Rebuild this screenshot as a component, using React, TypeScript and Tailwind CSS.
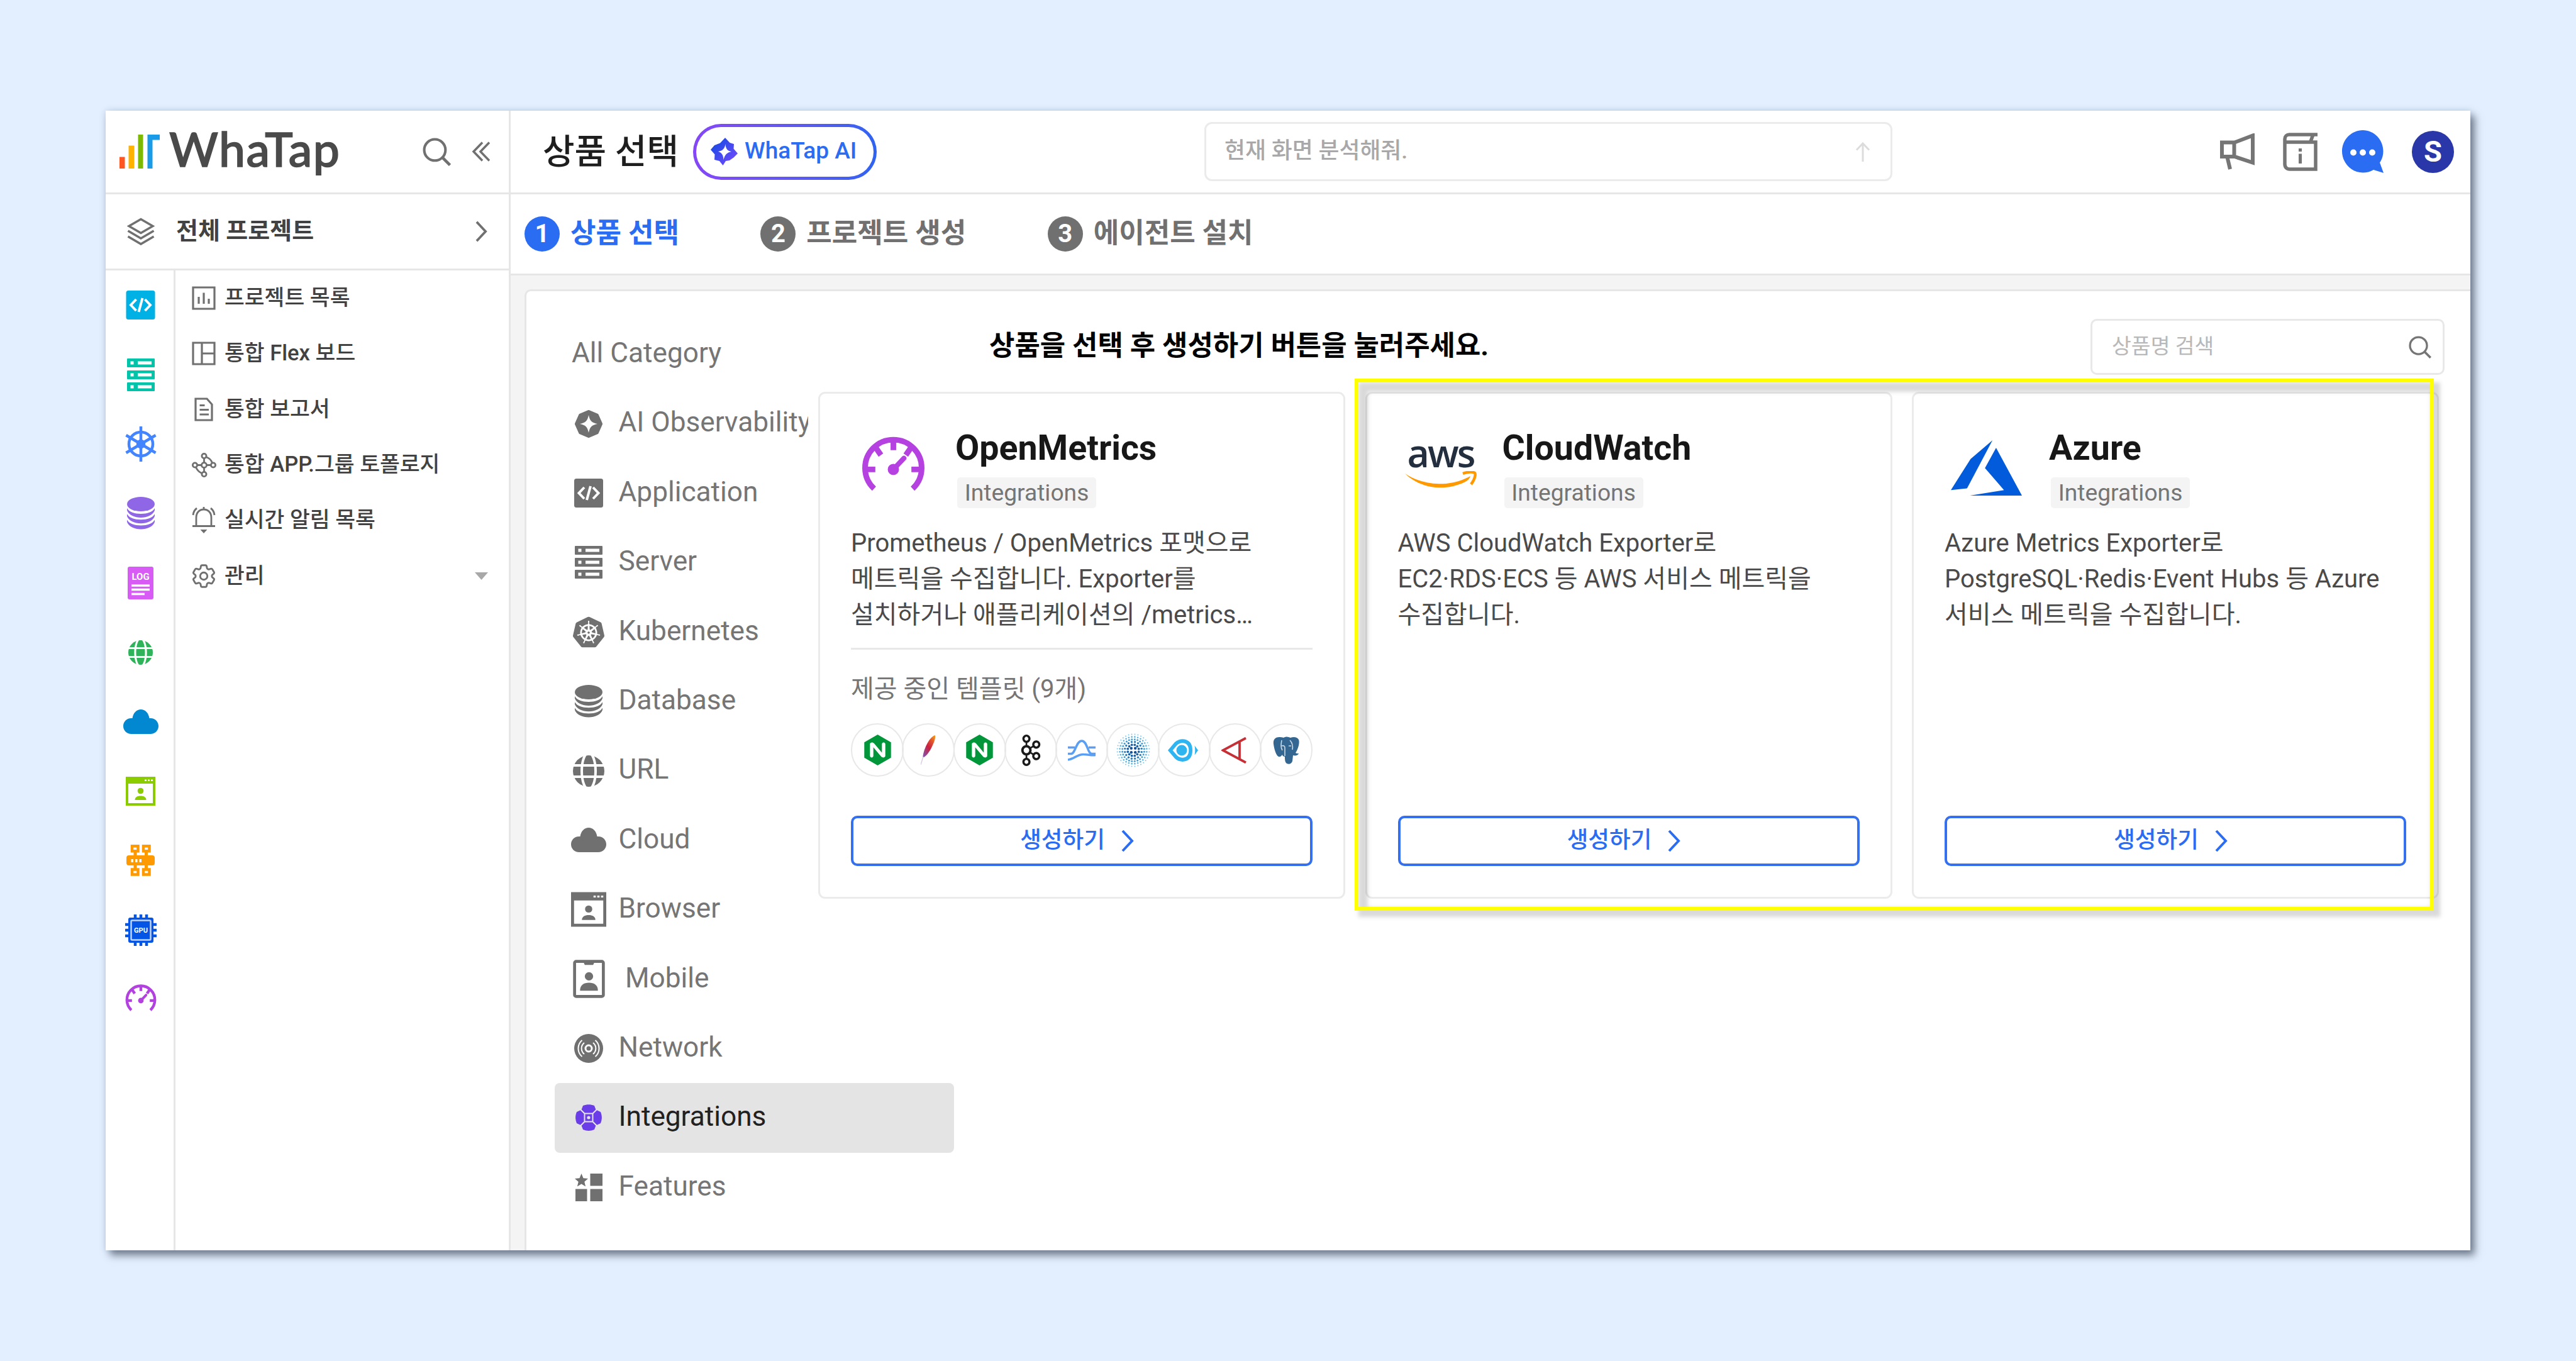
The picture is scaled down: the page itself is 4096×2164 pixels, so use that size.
import React from 'react';
import { SiApachekafka, SiKubernetes, SiNginx } from 'react-icons/si';
import { HiOutlineCog6Tooth } from 'react-icons/hi2';

interface IconProps {
  className?: string;
}

/* ---------- product icons (shared by the rail and the category list) ---------- */

const CodeIcon: React.FC<IconProps> = ({ className }) => (
  <svg viewBox="0 0 46 46" className={className}>
    <rect width="46" height="46" rx="3.5" fill="currentColor" />
    <path d="M16 14l-8.500 9 8.500 9M26 12l-6 22M30 14l8.500 9-8.500 9" fill="none" stroke="#fff" strokeWidth="4" />
  </svg>
);

const ServerIcon: React.FC<IconProps> = ({ className }) => (
  <svg viewBox="0 0 44 52" className={className}>
    {[0, 19, 38].map((y) => (
      <g key={y}>
        <rect y={y} width="44" height="14" rx="1" fill="currentColor" />
        <rect x="5.500" y={y + 4.5} width="5" height="5" fill="#fff" />
        <rect x="17" y={y + 4.5} width="22" height="5" fill="#fff" />
      </g>
    ))}
  </svg>
);

const DatabaseIcon: React.FC<IconProps> = ({ className }) => (
  <svg viewBox="0 0 44 52" className={className} fill="currentColor">
    <ellipse cx="22" cy="11.500" rx="22" ry="11.500" />
    {[0, 9.2, 18.4].map((dy) => (
      <path
        key={dy}
        transform={`translate(0 ${dy})`}
        d="M0 18C3 24 12 27 22 27S41 24 44 18V21.500C41 29 32 33 22 33S3 29 0 21.500Z"
      />
    ))}
  </svg>
);

const GlobeIcon: React.FC<IconProps> = ({ className }) => (
  <svg viewBox="0 0 50 50" className={className}>
    <circle cx="25" cy="25" r="25" fill="currentColor" />
    <g fill="none" stroke="#fff" strokeWidth="4">
      <ellipse cx="25" cy="25" rx="11" ry="29" />
      <path d="M0 16h50M0 34h50" />
    </g>
  </svg>
);

const CloudIcon: React.FC<IconProps> = ({ className }) => (
  <svg viewBox="0 0 56 39" className={className} fill="currentColor">
    <path d="M13 39C5 39 0 33 0 26.500S5 14 12.500 14h2C16 5 21.500 0 28 0s12 5 13.500 14h2C51 14 56 20 56 26.500S51 39 43 39z" />
  </svg>
);

const BrowserIcon: React.FC<IconProps> = ({ className }) => (
  <svg viewBox="0 0 47 46" className={className} fill="currentColor">
    <path fillRule="evenodd" d="M0 0h47v46H0zM4 11v31h39V11z" />
    <path d="M30 4.500h3v2.500h-3zM35 4.500h3v2.500h-3zM40 4.500h3v2.500h-3z" fill="#fff" />
    <circle cx="23.500" cy="22.500" r="4.800" />
    <path d="M14.500 37c0-4.500 4-6.500 9-6.500s9 2 9 6.500z" />
  </svg>
);

const GaugeIcon: React.FC<IconProps> = ({ className }) => (
  <svg viewBox="0 0 100 90" className={className} fill="none" stroke="currentColor">
    <path d="M19 86A45.500 45.500 0 1 1 81 86" strokeWidth="9" />
    <path d="M50 4v20M21 19l9 13M79 19l-9 13M4 55h17M96 55H79" strokeWidth="9" />
    <path d="M50 55l17-18" strokeWidth="8" strokeLinecap="round" />
    <circle cx="50" cy="55" r="9" fill="currentColor" stroke="none" />
  </svg>
);

/* ---------- rail only ---------- */

const HelmIcon: React.FC<IconProps> = ({ className }) => (
  <svg viewBox="0 0 50 56" className={className} fill="none" stroke="currentColor" strokeWidth="4.500">
    <circle cx="25" cy="28" r="19" />
    <circle cx="25" cy="28" r="5" fill="currentColor" />
    <path d="M25 0v56M1.500 14l47 28M48.500 14l-47 28" />
  </svg>
);

const LogIcon: React.FC<IconProps> = ({ className }) => (
  <svg viewBox="0 0 41 52" className={className}>
    <rect width="41" height="52" rx="3" fill="currentColor" />
    <text x="20.500" y="21" textAnchor="middle" fill="#fff" className="font-[Roboto] text-[15px] font-bold">
      LOG
    </text>
    <path d="M6 30h29M6 36.500h29M6 43.500h21" stroke="#fff" strokeWidth="3.500" />
  </svg>
);

const SwitchIcon: React.FC<IconProps> = ({ className }) => (
  <svg viewBox="0 0 45 50" className={className}>
    <rect y="17" width="45" height="16" rx="4" fill="currentColor" />
    <path d="M14 8v34M31.500 8v34" stroke="currentColor" strokeWidth="5" />
    <path d="M7.500 23h3.500v5H7.500zM14 23h3.500v5H14zM20.500 23h3.500v5h-3.500z" fill="#fff" />
    <g fill="#fff" stroke="currentColor" strokeWidth="4.500">
      <rect x="9" y="2.300" width="9.500" height="8" />
      <rect x="27" y="2.300" width="9.500" height="8" />
      <rect x="9" y="39.500" width="9.500" height="8" />
      <rect x="27" y="39.500" width="9.500" height="8" />
    </g>
  </svg>
);

const GpuIcon: React.FC<IconProps> = ({ className }) => (
  <svg viewBox="0 0 50 50" className={className}>
    <path
      d="M16 0v50M25 0v50M34 0v50M0 16h50M0 25h50M0 34h50"
      stroke="currentColor"
      strokeWidth="4.500"
    />
    <rect x="5" y="5" width="40" height="40" rx="3" fill="currentColor" />
    <rect x="9.500" y="9.500" width="31" height="31" rx="1.500" fill="none" stroke="#fff" strokeOpacity=".75" strokeWidth="2.500" />
    <text x="25" y="29" textAnchor="middle" fill="#fff" className="font-[Roboto] text-[11px] font-bold">
      GPU
    </text>
  </svg>
);

/* ---------- category only ---------- */

const SparkleIcon: React.FC<IconProps> = ({ className }) => (
  <svg viewBox="0 0 44 44" className={className}>
    <path
      d="M22 3l13 5.500L41 22l-6 13.500L22 41 9 35.500 3 22 9 8.500z"
      fill="currentColor"
      stroke="currentColor"
      strokeWidth="6"
      strokeLinejoin="round"
    />
    <path d="M22 8c1.800 9 5 12.200 14 14-9 1.800-12.200 5-14 14-1.800-9-5-12.200-14-14 9-1.800 12.200-5 14-14z" fill="#fff" />
  </svg>
);

const MobileIcon: React.FC<IconProps> = ({ className }) => (
  <svg viewBox="0 0 50 60" className={className}>
    <rect x="2.500" y="2.500" width="45" height="55" rx="2.500" fill="none" stroke="currentColor" strokeWidth="4.600" />
    <path d="M16 3h18l-2.500 5h-13z" fill="currentColor" />
    <circle cx="25" cy="26" r="6.500" fill="currentColor" />
    <path d="M11 48.500c0-9 6-12.500 14-12.500s14 3.500 14 12.500z" fill="currentColor" />
  </svg>
);

const NetworkIcon: React.FC<IconProps> = ({ className }) => (
  <svg viewBox="0 0 46 46" className={className}>
    <circle cx="23" cy="23" r="23" fill="currentColor" />
    <g fill="none" stroke="#fff" strokeWidth="2">
      <circle cx="23" cy="23" r="5" strokeWidth="3" />
      <path d="M16 32a11.500 11.500 0 0 1 0-18M30 14a11.500 11.500 0 0 1 0 18M12.500 36a17 17 0 0 1 0-26M33.500 10a17 17 0 0 1 0 26" />
    </g>
  </svg>
);

const IntegrationsIcon: React.FC<IconProps> = ({ className }) => (
  <svg viewBox="0 0 42 42" className={className}>
    <path
      d="M12 2c6-2.500 12-2.500 18 0l2.500 6.500L40 12c2.500 6 2.500 12 0 18l-7.500 3.500L30 40c-6 2.500-12 2.500-18 0l-2.500-6.500L2 30c-2.500-6-2.500-12 0-18l7.500-3.500z"
      fill="#6a3de8"
    />
    <path d="M14.500 14.500h13v13h-13zM8 8l6.500 6.500M34 8l-6.500 6.500M8 34l6.500-6.500M34 34l-6.500-6.500" fill="none" stroke="#e4e4e4" strokeWidth="2" />
    <circle cx="21" cy="21" r="2.600" fill="#e4e4e4" />
  </svg>
);

const FeaturesIcon: React.FC<IconProps> = ({ className }) => (
  <svg viewBox="0 0 44 44" className={className} fill="currentColor">
    <path d="M24.500 0H44v19.500H24.500zM1 24.500h18.500V44H1zM24.500 24.500H44V44H24.500z" />
    <path d="M10.500 0l3 7.300 7.500.6-5.700 5 1.800 7.600-6.600-4.100-6.600 4.100 1.800-7.600L0 7.900l7.500-.6z" />
  </svg>
);

/* ---------- chrome icons ---------- */

const SearchIcon: React.FC<IconProps> = ({ className }) => (
  <svg viewBox="0 0 44 44" className={className} fill="none" stroke="currentColor" strokeWidth="4">
    <circle cx="19" cy="19" r="16.500" />
    <path d="M30.500 30.500L42.500 42.500" strokeWidth="4.500" />
  </svg>
);

const ChevronRight: React.FC<IconProps> = ({ className }) => (
  <svg viewBox="0 0 20 36" className={className} fill="none" stroke="currentColor" strokeWidth="4">
    <path d="M2 2l15 16L2 34" />
  </svg>
);

const LayersIcon: React.FC<IconProps> = ({ className }) => (
  <svg viewBox="0 0 44 44" className={className} fill="none" stroke="currentColor" strokeWidth="3.600">
    <path d="M22 2.500l19 11-19 11-19-11zM1.500 21L22 33l20.500-12M1.500 30L22 42l20.500-12" />
  </svg>
);

const ListIcon = () => (
  <svg viewBox="0 0 38 38" className="h-[38px] w-[38px]" fill="none" stroke="currentColor" strokeWidth="3.200">
    <path d="M2 2h34v34H2zM11 17v11M19 10.500V28M27 20v8" />
  </svg>
);

const BoardIcon = () => (
  <svg viewBox="0 0 38 38" className="h-[38px] w-[38px]" fill="none" stroke="currentColor" strokeWidth="3.200">
    <path d="M2 2h34v34H2zM16 2v34M16 19h20" />
  </svg>
);

const ReportIcon = () => (
  <svg viewBox="0 0 30 38" className="h-[38px] w-[30px]" fill="none" stroke="currentColor" strokeWidth="3.200">
    <path d="M2 2h18l8 9v25H2zM8.500 12.500h8M8.500 19.500h14.500M8.500 27h14.500" />
  </svg>
);

const TopologyIcon = () => (
  <svg viewBox="0 0 39 39" className="h-[39px] w-[39px]" fill="none" stroke="currentColor" strokeWidth="2.800">
    <circle cx="19.500" cy="5" r="3.600" />
    <circle cx="5" cy="19.500" r="3.600" />
    <circle cx="19.500" cy="19.500" r="4" />
    <circle cx="34" cy="19.500" r="3.600" />
    <circle cx="19.500" cy="34" r="3.600" />
    <path d="M19.500 8.500v7M8.500 19.500h7M23.500 19.500h7M19.500 23.500v7M22.500 6.500c6 2 8.500 5 10 9.500M6.500 23c2 4.500 5 7.500 9.500 9.500" />
  </svg>
);

const BellIcon = () => (
  <svg viewBox="0 0 38 42" className="h-[42px] w-[38px]" fill="none" stroke="currentColor" strokeWidth="2.800">
    <path d="M1 30.500h36M7 30V17c0-8 5-13 12-13s12 5 12 13v13M19 4V0M2 13c.5-5 2.500-8.500 6-11M36 13c-.5-5-2.500-8.500-6-11" />
    <path d="M13.500 36h11L19 42z" fill="currentColor" stroke="none" />
  </svg>
);

const MegaphoneIcon = () => (
  <svg viewBox="0 0 55 58" className="h-[58px] w-[55px]" fill="none" stroke="currentColor" strokeWidth="6">
    <path d="M3 14.500h20L52 3.500v43L23 37H3zM22.500 14.500V37M11.500 38l4.500 19" />
  </svg>
);

const ManualIcon = () => (
  <svg viewBox="0 0 55 61" className="h-[61px] w-[55px]" fill="none" stroke="currentColor" strokeWidth="5.500">
    <path d="M55 3H10C6 3 3 6 3 10v40c0 5 3 8 8 8h41V15H3M48 3l-4 11" />
    <path d="M27.500 25v5M27.500 33.500V49" strokeWidth="5" />
  </svg>
);

const ChatIcon = () => (
  <svg viewBox="0 0 66 68" className="h-[68px] w-[66px]">
    <path d="M33 0c18 0 32.500 15 32.500 33.500 0 7-2 13-5.500 18L66 68l-16-5c-5 3-11 4.500-17 4.500C15 67.500 0 52 0 33.500S15 0 33 0z" fill="#2a6cf2" />
    <circle cx="18" cy="35.500" r="5" fill="#fff" />
    <circle cx="33" cy="35.500" r="5" fill="#fff" />
    <circle cx="48" cy="35.500" r="5" fill="#fff" />
  </svg>
);

const WhatapAiIcon = () => (
  <svg viewBox="0 0 43 44" className="h-[44px] w-[43px]">
    <defs>
      <linearGradient id="ai-mark" x1="0" y1="0" x2="1" y2="1">
        <stop offset="0" stopColor="#0a49e0" />
        <stop offset="1" stopColor="#7d4bff" />
      </linearGradient>
    </defs>
    <path
      fill="url(#ai-mark)"
      fillRule="evenodd"
      d="M23 0l7.500 8 6.500 2-.5 7.500L43 25l-6.500 6.500L30 36l-6 1-4.500 7-5.500-7-8-2 .5-8.500L0 19l6-7 9-3.500zM23.500 10c-1 7-4 10.500-11.500 12 6 2 8 5.500 8.500 13 2-8 5.500-11.500 12.500-13-6.500-1-9-4.500-9.500-12z"
    />
  </svg>
);

/* ---------- vendor logos ---------- */

const WhatapBars = () => (
  <svg viewBox="0 0 64 54" className="h-[54px] w-[64px]">
    <path d="M0 35.500h8.500V54H0z" fill="#ff5722" />
    <path d="M14.500 17.500h9V54h-9z" fill="#ffb300" />
    <path d="M29.500 0h8v54h-8z" fill="#7cb900" />
    <path d="M44.500 0H64v8.500H52.500V54h-8z" fill="#1a9be8" />
  </svg>
);

const AwsLogo = () => (
  <div className="flex flex-col items-center pt-[2px]">
    <span className="h-[52px] font-['Open_Sans',sans-serif] text-[61px] leading-[46px] font-semibold tracking-[-3px] text-[#232f3e]">aws</span>
    <svg viewBox="0 0 114 28" className="h-[28px] w-[114px]" fill="none" stroke="#ff9900">
      <path d="M0 4C30 24 72 26 104 8c-2 6-6 8-10 10C64 32 26 29 0 4z" fill="#ff9900" stroke="none" />
      <path d="M92 4c8-3 16-3 19-1 2 3-1 12-6 18" strokeWidth="4.500" />
    </svg>
  </div>
);

const AzureLogo = () => (
  <svg viewBox="0 0 198 139" preserveAspectRatio="none" className="mt-[16px] mr-[3px] h-[88px] w-[113px]" fill="#015bda">
    <path d="M116 0L55 47 0 125l45-4zM126 19L95 70l53 55-95 14h145z" />
  </svg>
);

const FeatherLogo = () => (
  <svg viewBox="0 0 24 47" className="h-[47px] w-[24px]">
    <defs>
      <linearGradient id="feather" x1="1" y1="0" x2=".3" y2="1">
        <stop offset="0" stopColor="#f9a21b" />
        <stop offset=".3" stopColor="#e0552c" />
        <stop offset=".6" stopColor="#c9203f" />
        <stop offset="1" stopColor="#8a4fa0" />
      </linearGradient>
    </defs>
    <path d="M23 0c-4 1-8 5-12 12C7 19 4 27 3 36c5-2 9-7 13-14 4-8 8-16 7-22z" fill="url(#feather)" />
    <path d="M4 34L0 47" stroke="#d9cfe0" strokeWidth="1.500" />
  </svg>
);

const PulsarLogo = () => (
  <svg viewBox="0 0 44 34" className="h-[34px] w-[44px]" fill="none" stroke="#5b9ff5" strokeWidth="3.500">
    <path d="M0 12.500h11M33 12.500h11M0 22.500h5c7 0 8-20.500 17-20.500s9 20.500 16 20.500h6M0 32c10-1 15-9 25-8.500 8 0 12 2 19 1" />
  </svg>
);

const dotRings = [
  { r: 25.5, n: 32, size: 2, color: '#7cc8ec' },
  { r: 21.5, n: 28, size: 2.6, color: '#56b4e2' },
  { r: 17.5, n: 24, size: 3, color: '#3f9fd4' },
  { r: 13.5, n: 16, size: 3.4, color: '#2c80be' },
  { r: 9, n: 12, size: 3.8, color: '#1a62a6' },
  { r: 4.5, n: 4, size: 4.4, color: '#14509a' },
];

const DotsLogo = () => (
  <svg viewBox="-27 -27 54 54" className="h-[54px] w-[54px]">
    {dotRings.map((ring) =>
      Array.from({ length: ring.n }, (_, i) => {
        const a = ((i + 0.5) / ring.n) * Math.PI * 2;
        return <circle key={`${ring.r}-${i}`} cx={ring.r * Math.cos(a)} cy={ring.r * Math.sin(a)} r={ring.size / 2} fill={ring.color} />;
      })
    )}
  </svg>
);

const MilvusLogo = () => (
  <svg viewBox="0 0 48 36" className="mr-[3px] h-[36px] w-[48px]" fill="#2fb4f2">
    <path fillRule="evenodd" d="M0 18L11 5c7-6.500 18-6.500 24 0 3 3.500 4 8 4 13s-1 9.500-4 13c-6 6.500-17 6.500-24 0zM7.500 18l7 8c5 5 13 5 16.500 0 3-4 3-12 0-16-3.500-5-11.500-5-16.500 0z" />
    <circle cx="22" cy="18" r="8.500" />
    <path d="M42.500 10.500L48 18l-5.500 7.500c1-5 1-10 0-15z" />
  </svg>
);

const AerospikeLogo = () => (
  <svg viewBox="0 0 40 42" className="mr-[4px] h-[42px] w-[40px]" fill="none" stroke="#c62f35" strokeWidth="3.800">
    <path d="M39 1.500L2.500 21 39 40.500M29 7v28" />
  </svg>
);

const PostgresLogo = () => (
  <svg viewBox="0 0 42 44" className="h-[44px] w-[42px]">
    <path
      d="M10 1C4 1 0 5 1 12c1 8 4 18 8 20 3 1 4-1 6-3 0 2 2 3 4 3 0 4 0 9 3 11 4 2 8 0 9-4l1-9c4 1 8 0 9-3-2 0-4 0-5-1 4-6 7-16 5-21C39 1 33 0 28 2 24 0 20 0 17 2 15 1 12 1 10 1z"
      fill="#336791"
    />
    <path d="M14 6c-1 6-2 11 1 16M19 31V18c0-3-2-4-5-3M27 6c4 4 5 9 4 15M25 15h4" fill="none" stroke="#fff" strokeOpacity=".75" strokeWidth="1.600" />
  </svg>
);

/* ---------- data ---------- */

const railIcons = [
  <CodeIcon className="h-[46px] w-[47px] text-[#00b1e6]" />,
  <ServerIcon className="h-[52px] w-[44px] text-[#00c4aa]" />,
  <HelmIcon className="h-[56px] w-[50px] text-[#4385ff]" />,
  <DatabaseIcon className="h-[52px] w-[44px] text-[#8f66e6]" />,
  <LogIcon className="h-[52px] w-[41px] text-[#d85bf5]" />,
  <GlobeIcon className="h-[39px] w-[39px] text-[#2eb35a]" />,
  <CloudIcon className="h-[39px] w-[56px] text-[#0288d1]" />,
  <BrowserIcon className="h-[46px] w-[47px] text-[#8bcc00]" />,
  <SwitchIcon className="h-[50px] w-[45px] text-[#ff9900]" />,
  <GpuIcon className="h-[50px] w-[50px] text-[#0454e6]" />,
  <GaugeIcon className="mb-[7px] h-[44px] w-[50px] text-[#b241e0]" />,
];

const menuItems = [
  { label: '프로젝트 목록', icon: <ListIcon /> },
  { label: '통합 Flex 보드', icon: <BoardIcon /> },
  { label: '통합 보고서', icon: <ReportIcon /> },
  { label: '통합 APP.그룹 토폴로지', icon: <TopologyIcon /> },
  { label: '실시간 알림 목록', icon: <BellIcon /> },
  { label: '관리', icon: <HiOutlineCog6Tooth className="h-[46px] w-[46px]" />, expandable: true },
];

const steps = ['상품 선택', '프로젝트 생성', '에이전트 설치'];

const categories = [
  { label: 'AI Observability', icon: <SparkleIcon className="h-[44px] w-[44px]" /> },
  { label: 'Application', icon: <CodeIcon className="h-[46px] w-[46px]" /> },
  { label: 'Server', icon: <ServerIcon className="h-[52px] w-[44px]" /> },
  { label: 'Kubernetes', icon: <SiKubernetes className="h-[50px] w-[50px]" /> },
  { label: 'Database', icon: <DatabaseIcon className="h-[52px] w-[44px]" /> },
  { label: 'URL', icon: <GlobeIcon className="h-[50px] w-[50px]" /> },
  { label: 'Cloud', icon: <CloudIcon className="h-[39px] w-[56px]" /> },
  { label: 'Browser', icon: <BrowserIcon className="h-[56px] w-[56px]" /> },
  { label: 'Mobile', icon: <MobileIcon className="h-[61px] w-[51px]" />, inset: true },
  { label: 'Network', icon: <NetworkIcon className="h-[46px] w-[46px]" /> },
  { label: 'Integrations', icon: <IntegrationsIcon className="h-[42px] w-[42px]" />, active: true },
  { label: 'Features', icon: <FeaturesIcon className="h-[44px] w-[44px]" /> },
];

const templates = [
  <SiNginx className="h-[49px] w-[49px] text-[#009639]" />,
  <FeatherLogo />,
  <SiNginx className="h-[49px] w-[49px] text-[#009639]" />,
  <SiApachekafka className="h-[50px] w-[50px] text-[#1a1a1a]" />,
  <PulsarLogo />,
  <DotsLogo />,
  <MilvusLogo />,
  <AerospikeLogo />,
  <PostgresLogo />,
];

const products = [
  {
    name: 'OpenMetrics',
    logo: <GaugeIcon className="mr-[1px] h-[89px] w-[99px] text-[#b441e0]" />,
    lines: ['Prometheus / OpenMetrics 포맷으로', '메트릭을 수집합니다. Exporter를', '설치하거나 애플리케이션의 /metrics…'],
    templates,
  },
  {
    name: 'CloudWatch',
    logo: <AwsLogo />,
    lines: ['AWS CloudWatch Exporter로', 'EC2·RDS·ECS 등 AWS 서비스 메트릭을', '수집합니다.'],
  },
  {
    name: 'Azure',
    logo: <AzureLogo />,
    lines: ['Azure Metrics Exporter로', 'PostgreSQL·Redis·Event Hubs 등 Azure', '서비스 메트릭을 수집합니다.'],
  },
];

/* ---------- layout ---------- */

const Sidebar = () => (
  <aside className="flex w-[644px] shrink-0 flex-col border-r-[3px] border-[#e6e6e6]">
    <div className="flex h-[133px] shrink-0 items-center border-b-[3px] border-[#e6e6e6] pl-[22px]">
      <WhatapBars />
      <span className="ml-[15px] w-[381px] pb-[11px] font-[Lato,sans-serif] text-[75px] leading-[90px] font-medium tracking-[1.500px] text-[#4a4a4a] [-webkit-text-stroke:1.500px_#4a4a4a]">
        WhaTap
      </span>
      <SearchIcon className="mt-[1px] ml-[22px] h-[45px] w-[45px] text-[#707070]" />
      <svg viewBox="0 0 29 32" className="ml-[33px] h-[32px] w-[29px]" fill="none" stroke="#707070" strokeWidth="3.500">
        <path d="M17 1.500L3 16l14 14.500M28 1.500L14 16l14 14.500" />
      </svg>
    </div>
    <div className="flex h-[121px] shrink-0 items-center border-b-[3px] border-[#e6e6e6] pr-[34px] pl-[34px]">
      <LayersIcon className="h-[44px] w-[44px] text-[#707070]" />
      <span className="ml-[34px] flex-1 pb-[2px] text-[38px] leading-[60px] font-bold text-[#424242]">전체 프로젝트</span>
      <ChevronRight className="h-[34px] w-[19px] text-[#707070]" />
    </div>
    <div className="flex min-h-0 flex-1">
      <nav className="w-[111px] shrink-0 border-r-[3px] border-[#e6e6e6] pl-[3px]">
        {railIcons.map((icon, i) => (
          <div key={i} className="flex h-[110.400px] items-center justify-center">
            {icon}
          </div>
        ))}
      </nav>
      <ul className="flex-1">
        {menuItems.map((item) => (
          <li key={item.label} className="flex h-[88.300px] items-center pr-[33px] pl-[22px]">
            <span className="flex w-[46px] shrink-0 items-center justify-center text-[#707070]">{item.icon}</span>
            <span className="ml-[10px] flex-1 pb-[2px] text-[34.600px] leading-[50px] font-medium text-[#424242]">{item.label}</span>
            {item.expandable && (
              <svg viewBox="0 0 21 12" className="h-[12px] w-[21px]" fill="#a8a8a8">
                <path d="M0 0h21L10.500 12z" />
              </svg>
            )}
          </li>
        ))}
      </ul>
    </div>
  </aside>
);

const TopBar = () => (
  <header className="flex h-[133px] shrink-0 items-center border-b-[3px] border-[#e6e6e6] pr-[26px] pl-[51px]">
    <div className="flex w-[1052px] items-center">
      <h1 className="text-[55px] leading-[80px] font-medium text-[#1e1e1e]">상품 선택</h1>
      <div className="ml-[23px] h-[89px] w-[292px] rounded-full bg-linear-to-r from-[#8546f8] to-[#2e63f0] p-[5px]">
        <div className="flex h-full items-center rounded-full bg-white pl-[23px]">
          <WhatapAiIcon />
          <span className="ml-[11px] pb-[3px] text-[37px] leading-[50px] font-medium text-[#2a6cf2]">WhaTap AI</span>
        </div>
      </div>
    </div>
    <div className="flex h-[94px] w-[1094px] items-center justify-between rounded-[12px] border-[3px] border-[#ebebeb] pr-[32px] pl-[29px]">
      <span className="pb-[3px] text-[35.800px] leading-[50px] font-medium text-[#a8a8a8]">현재 화면 분석해줘.</span>
      <svg viewBox="0 0 24 31" className="h-[31px] w-[24px]" fill="none" stroke="#dcdcdc" strokeWidth="3">
        <path d="M12 31V2M2 12.500L12 2l10 10.500" />
      </svg>
    </div>
    <div className="ml-auto flex items-center text-[#757575]">
      <MegaphoneIcon />
      <div className="ml-[45px]">
        <ManualIcon />
      </div>
      <div className="ml-[39px]">
        <ChatIcon />
      </div>
      <div className="ml-[45px] flex h-[67px] w-[67px] items-center justify-center rounded-full bg-[#2937a8] pb-[2px] text-[47px] leading-none font-bold text-white">S</div>
    </div>
  </header>
);

const Stepper = () => (
  <ol className="flex h-[129px] shrink-0 items-center border-b-[3px] border-[#e6e6e6] pl-[22px]">
    {steps.map((step, i) => {
      const current = i === 0;
      return (
        <li key={step} className="mr-[129.500px] flex items-center">
          <span
            className={`flex h-[56px] w-[56px] items-center justify-center rounded-full text-[40px] leading-none font-bold text-white ${
              current ? 'bg-[#2a6cf2]' : 'bg-[#707070]'
            }`}
          >
            {i + 1}
          </span>
          <span className={`ml-[17px] pb-[3px] text-[44px] leading-[60px] font-bold ${current ? 'text-[#2a6cf2]' : 'text-[#707070]'}`}>{step}</span>
        </li>
      );
    })}
  </ol>
);

const CategoryList = () => (
  <ul className="w-[635px] shrink-0 pt-[45px] text-[44.200px] text-[#757575]">
    <li className="flex h-[110.400px] items-center pb-[4px] pl-[27px]">All Category</li>
    {categories.map((item) => (
      <li key={item.label} className={`flex h-[110.400px] items-center rounded-[8px] pl-[24px] ${item.active ? 'bg-[#e4e4e4] text-[#212121]' : ''}`}>
        <span className="flex w-[60px] shrink-0 items-center justify-center text-[#707070]">{item.icon}</span>
        <span className={`pb-[4px] whitespace-nowrap ${item.inset ? 'ml-[28px]' : 'ml-[17.500px]'}`}>{item.label}</span>
      </li>
    ))}
  </ul>
);

const ProductCard = ({ product }: { product: (typeof products)[number] }) => (
  <article className="flex h-[806px] w-[838px] flex-col rounded-[11px] border-[3px] border-[#ebebeb] px-[49px] pt-[52px] pb-[49px]">
    <div className="flex h-[130px]">
      <div className="flex w-[136px] items-center justify-center pb-[14px]">{product.logo}</div>
      <div className="ml-[30px]">
        <h3 className="text-[55.500px] leading-[70px] font-bold text-[#171717]">{product.name}</h3>
        <span className="mt-[11px] ml-[3px] block h-[49px] w-[221px] rounded-[5px] bg-[#f4f4f4] text-center text-[37.200px] leading-[48px] text-[#757575]">Integrations</span>
      </div>
    </div>
    <div className="mt-[27px] text-[40px] leading-[57px] whitespace-nowrap text-[#4a4a4a]">
      {product.lines.map((line) => (
        <p key={line}>{line}</p>
      ))}
    </div>
    {product.templates && (
      <>
        <div className="mt-[24px] h-[3px] bg-[#e8e8e8]" />
        <p className="mt-[33px] text-[40px] leading-[60px] text-[#757575]">제공 중인 템플릿 (9개)</p>
        <div className="mt-[24px] flex">
          {product.templates.map((logo, i) => (
            <div key={i} className="mr-[-2.800px] flex h-[85px] w-[84.100px] shrink-0 items-center justify-center rounded-full border-[2.500px] border-[#e8e8e8]">
              {logo}
            </div>
          ))}
        </div>
      </>
    )}
    <button className="mt-auto flex h-[80px] shrink-0 items-center justify-center rounded-[10px] border-[4px] border-[#3570ee] pr-[15px] text-[36.600px] font-medium text-[#2a6cf2]">
      <span className="pb-[2px]">생성하기</span>
      <ChevronRight className="ml-[26px] h-[36px] w-[20px]" />
    </button>
  </article>
);

export default function App() {
  return (
    <div className="h-[2164px] w-[4096px] overflow-hidden bg-[#e3effe] pt-[176px] pl-[168px] font-['Roboto','Noto_Sans_CJK_KR',sans-serif]">
      <div className="h-[1812px] w-[3760px] shadow-[7px_8px_12px_rgba(45,55,70,0.6),0_0_9px_rgba(90,130,190,0.25)]">
        <div className="flex h-full w-full overflow-hidden bg-white">
          <Sidebar />
          <div className="flex min-w-0 flex-1 flex-col">
            <TopBar />
            <Stepper />
            <main className="min-h-0 flex-1 overflow-hidden bg-[#f4f4f4] pt-[22px] pl-[22px]">
              <div className="flex h-full items-start rounded-tl-[10px] border-t-[3px] border-l-[3px] border-[#e6e6e6] bg-white pl-[45px]">
                <CategoryList />
                {/* the panel covers the overflowing end of the category labels */}
                <section className="relative ml-[-232px] w-[2643px] shrink-0 bg-white pt-[44px] pl-[16px]">
                  <div className="flex h-[89px] items-center pr-[41px]">
                    <h2 className="flex-1 pb-[3px] pl-[272px] text-[43.900px] leading-[60px] font-bold text-black">상품을 선택 후 생성하기 버튼을 눌러주세요.</h2>
                    <div className="flex h-[89px] w-[563px] items-center justify-between rounded-[10px] border-[3px] border-[#e8e8e8] pr-[18px] pl-[31px]">
                      <span className="pb-[2px] text-[33.500px] leading-[50px] text-[#b8b8b8]">상품명 검색</span>
                      <SearchIcon className="h-[36px] w-[36px] text-[#757575]" />
                    </div>
                  </div>
                  <div className="relative mt-[27px] flex gap-[31.500px]">
                    {products.map((product) => (
                      <ProductCard key={product.name} product={product} />
                    ))}
                    <div className="pointer-events-none absolute top-[-15px] left-[859px] h-[850px] w-[1720px] border-[15px] border-black/15 blur-[3px]" />
                    <div className="pointer-events-none absolute top-[-21px] left-[853px] h-[846px] w-[1716px] border-[6.500px] border-[#ffff00]" />
                  </div>
                </section>
              </div>
            </main>
          </div>
        </div>
      </div>
    </div>
  );
}
